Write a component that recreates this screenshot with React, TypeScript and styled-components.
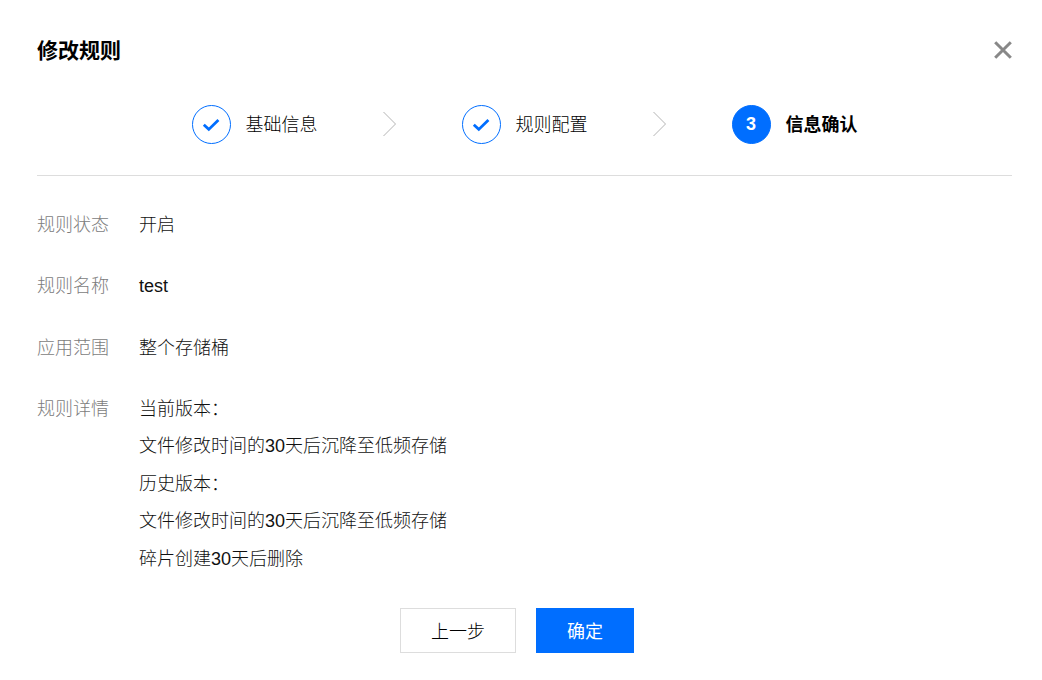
import React from "react";
import styled, { createGlobalStyle } from "styled-components";

const Global = createGlobalStyle`
  html, body { margin: 0; padding: 0; background: #fff; }
  body { font-family: "Liberation Sans", "Noto Sans CJK SC", sans-serif; color: #000; }
`;

const Dialog = styled.div`
  width: 1042px;
  height: 680px;
  box-sizing: border-box;
  padding: 0 30px 27px 37px;
  display: flex;
  flex-direction: column;
`;

const Header = styled.header`
  height: 105px;
  display: flex;
  align-items: flex-start;
  justify-content: space-between;
  padding-top: 37px;
  box-sizing: border-box;
`;

const Title = styled.h2`
  margin: 0;
  font-size: 21px;
  line-height: 28px;
  font-weight: 700;
  color: #000;
`;

const Close = styled.button`
  width: 18px;
  height: 18px;
  margin-top: 4px;
  padding: 0;
  border: 0;
  background: none;
  display: block;
`;

const Steps = styled.div`
  height: 71px;
  box-sizing: border-box;
  border-bottom: 1px solid #ddd;
  display: flex;
  justify-content: center;
  align-items: flex-start;
  gap: 65px;
`;

const Step = styled.div`
  display: flex;
  align-items: center;
  gap: 15px;
  height: 39px;
`;

const Circle = styled.span<{ $active?: boolean }>`
  width: 39px;
  height: 39px;
  box-sizing: border-box;
  border-radius: 50%;
  border: 1px solid #006eff;
  background: ${(p) => (p.$active ? "#006eff" : "#fff")};
  color: #fff;
  font-size: 18px;
  font-weight: 700;
  display: flex;
  align-items: center;
  justify-content: center;
`;

const StepLabel = styled.span<{ $active?: boolean }>`
  font-size: 18px;
  line-height: 26px;
  color: #000;
  font-weight: ${(p) => (p.$active ? 700 : 300)};
`;

const Arrow = styled.svg`
  width: 14px;
  height: 26px;
  margin-top: 6px;
  display: block;
`;

const Details = styled.dl`
  margin: 0;
  padding-top: 36px;
  display: flex;
  flex-direction: column;
  gap: 35px;
  flex: 1;
`;

const Row = styled.div`
  display: flex;
  font-size: 18px;
  line-height: 26.4px;
  font-weight: 300;
`;

const Label = styled.dt`
  width: 102px;
  flex: none;
  color: #7c7c7c;
`;

const Value = styled.dd`
  margin: 0;
  color: #111;
`;

const Lines = styled(Value)`
  margin-top: -5.5px;
  line-height: 37.5px;
`;

const Line = styled.div``;

const Footer = styled.footer`
  display: flex;
  gap: 20px;
  padding-left: 363px;
`;

const Button = styled.button<{ $primary?: boolean }>`
  height: 45px;
  width: ${(p) => (p.$primary ? 98 : 116)}px;
  box-sizing: border-box;
  padding: 0 0 2px;
  font: inherit;
  font-size: 18px;
  font-weight: ${(p) => (p.$primary ? 400 : 300)};
  border: 1px solid ${(p) => (p.$primary ? "#006eff" : "#ddd")};
  background: ${(p) => (p.$primary ? "#006eff" : "#fff")};
  color: ${(p) => (p.$primary ? "#fff" : "#000")};
`;

const Check = () => (
  <svg width="18" height="14" viewBox="0 0 18 14" fill="none">
    <path d="M1.8 6.8l5 4.6L16.4 2" stroke="#006eff" strokeWidth="2.8" />
  </svg>
);

const Chevron = () => (
  <Arrow viewBox="0 0 14 26" fill="none">
    <path d="M.5 1L12.5 13 .5 25" stroke="#b4b4b4" strokeWidth="1" />
  </Arrow>
);

export default function App() {
  return (
    <Dialog>
      <Global />
      <Header>
        <Title>修改规则</Title>
        <Close aria-label="关闭">
          <svg width="18" height="18" viewBox="0 0 18 18" fill="none">
            <path d="M1.2 1.2l15.6 15.6M16.8 1.2L1.2 16.8" stroke="#888" strokeWidth="3" />
          </svg>
        </Close>
      </Header>
      <Steps>
        <Step>
          <Circle><Check /></Circle>
          <StepLabel>基础信息</StepLabel>
        </Step>
        <Chevron />
        <Step>
          <Circle><Check /></Circle>
          <StepLabel>规则配置</StepLabel>
        </Step>
        <Chevron />
        <Step>
          <Circle $active>3</Circle>
          <StepLabel $active>信息确认</StepLabel>
        </Step>
      </Steps>
      <Details>
        <Row><Label>规则状态</Label><Value>开启</Value></Row>
        <Row><Label>规则名称</Label><Value>test</Value></Row>
        <Row><Label>应用范围</Label><Value>整个存储桶</Value></Row>
        <Row>
          <Label>规则详情</Label>
          <Lines>
            <Line>当前版本：</Line>
            <Line>文件修改时间的30天后沉降至低频存储</Line>
            <Line>历史版本：</Line>
            <Line>文件修改时间的30天后沉降至低频存储</Line>
            <Line>碎片创建30天后删除</Line>
          </Lines>
        </Row>
      </Details>
      <Footer>
        <Button>上一步</Button>
        <Button $primary>确定</Button>
      </Footer>
    </Dialog>
  );
}
